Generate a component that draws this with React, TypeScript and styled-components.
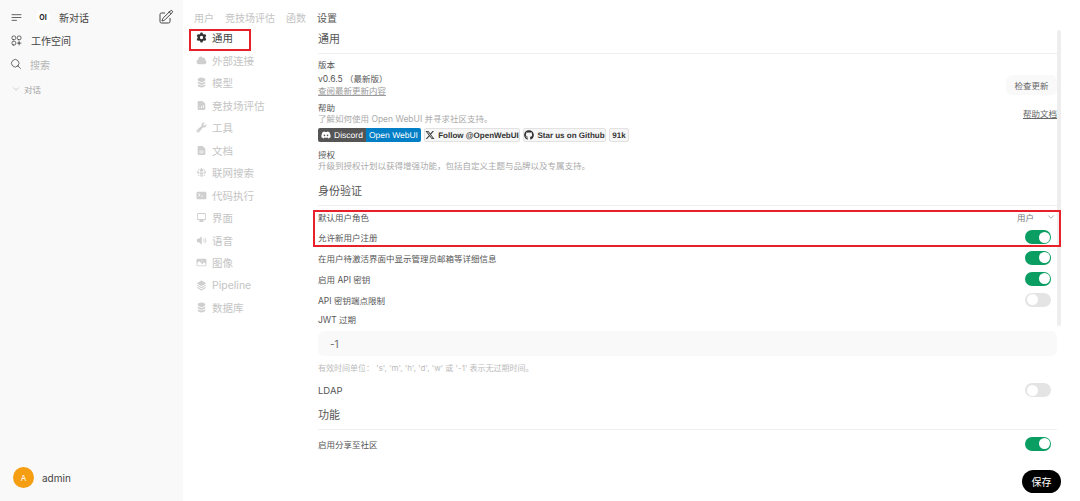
import React from 'react';
import styled, { createGlobalStyle } from 'styled-components';
import { FaDiscord, FaGithub } from 'react-icons/fa';
import { FaXTwitter } from 'react-icons/fa6';
import {
  HiMiniCircleStack,
  HiMiniCloud,
  HiMiniCog6Tooth,
  HiMiniCommandLine,
  HiMiniComputerDesktop,
  HiMiniDocumentChartBar,
  HiMiniDocumentText,
  HiMiniGlobeAlt,
  HiMiniPhoto,
  HiMiniSpeakerWave,
  HiMiniSquare3Stack3D,
  HiMiniWrench,
  HiOutlineBars3BottomLeft,
  HiOutlineChevronDown,
  HiOutlineMagnifyingGlass,
  HiOutlinePencilSquare,
  HiOutlineSquaresPlus,
} from 'react-icons/hi2';

const GlobalStyle = createGlobalStyle`
  html, body, #root {
    margin: 0;
    height: 100%;
  }
  body {
    background: #fff;
    color: #444;
    font-family: Inter, "Noto Sans CJK SC", "Noto Sans", sans-serif;
    overflow: hidden;
  }
`;

const Page = styled.div`
  position: relative;
  display: flex;
  height: 501px;
  width: 1080px;
  overflow: hidden;
`;

const Sidebar = styled.aside`
  width: 183px;
  flex-shrink: 0;
  background: #f9f9f9;
  display: flex;
  flex-direction: column;
  padding: 9px 9px 13px 10px;
  box-sizing: border-box;
`;

const SideTop = styled.div`
  display: flex;
  align-items: center;
  height: 16px;
  color: #444;
`;

const Logo = styled.div`
  width: 14px;
  height: 14px;
  border-radius: 50%;
  background: #fff;
  margin-left: 13px;
  display: flex;
  align-items: center;
  justify-content: center;
  font-size: 7px;
  font-weight: 700;
  color: #222;
`;

const NewChat = styled.span`
  font-size: 10px;
  margin-left: 9px;
  flex: 1;
`;

const SideItem = styled.div<{ $top: number; $muted?: boolean }>`
  display: flex;
  align-items: center;
  gap: 8px;
  height: 14px;
  margin-top: ${p => p.$top}px;
  font-size: 10px;
  color: ${p => (p.$muted ? '#b5b5b5' : '#444')};
  svg {
    color: #444;
  }
`;

const Group = styled.div`
  display: flex;
  align-items: center;
  gap: 4px;
  margin: 12px 0 0 2px;
  height: 12px;
  font-size: 8.5px;
  color: #a3a3a3;
`;

const Spacer = styled.div`
  flex: 1;
`;

const UserRow = styled.div`
  display: flex;
  align-items: center;
  gap: 8px;
  margin-left: 3px;
  font-size: 10px;
  color: #444;
`;

const Avatar = styled.div`
  width: 21px;
  height: 21px;
  border-radius: 50%;
  background: #f59e12;
  color: #fff;
  font-size: 8px;
  display: flex;
  align-items: center;
  justify-content: center;
`;

const Main = styled.main`
  flex: 1;
  display: flex;
  flex-direction: column;
  padding: 10px 0 0 11px;
  min-width: 0;
`;

const Tabs = styled.nav`
  display: flex;
  gap: 11px;
  height: 14px;
  align-items: center;
  font-size: 10px;
  color: #c4c4c4;
`;

const Tab = styled.span<{ $active?: boolean }>`
  color: ${p => (p.$active ? '#555' : '#c4c4c4')};
`;

const Body = styled.div`
  display: flex;
  min-height: 0;
`;

const SettingsNav = styled.ul`
  list-style: none;
  width: 124px;
  flex-shrink: 0;
  margin: 0;
  padding: 2.5px 0 0 2px;
  box-sizing: border-box;
`;

const NavItem = styled.li<{ $active?: boolean }>`
  display: flex;
  align-items: center;
  gap: 5px;
  height: 22.5px;
  font-size: 10.5px;
  color: ${p => (p.$active ? '#444' : '#c4c4c4')};
  svg {
    width: 11px;
    height: 11px;
    color: ${p => (p.$active ? '#333' : '#cfcfcf')};
  }
`;

const Content = styled.section`
  width: 739px;
  padding-top: 8px;
`;

const Heading = styled.h2<{ $top?: number }>`
  margin: ${p => p.$top ?? 0}px 0 0;
  height: 15px;
  line-height: 15px;
  font-size: 11px;
  font-weight: 400;
  color: #555;
  padding-bottom: 6px;
  border-bottom: 1px solid #f0f0f0;
`;

const Label = styled.div<{ $top?: number }>`
  margin-top: ${p => p.$top ?? 0}px;
  height: 12px;
  line-height: 12px;
  font-size: 8.5px;
  color: #555;
`;

const Version = styled.div`
  margin-top: 2px;
  height: 12px;
  line-height: 12px;
  font-size: 8.5px;
  color: #555;
`;

const SplitRow = styled.div`
  display: flex;
  justify-content: space-between;
  align-items: flex-start;
`;

const MutedLink = styled.a`
  display: block;
  height: 12px;
  line-height: 12px;
  font-size: 8.5px;
  color: #9a9a9a;
  text-decoration: underline;
`;

const DocsLink = styled.a`
  font-size: 8.5px;
  line-height: 12px;
  margin: 11px 0 -6px;
  color: #666;
  text-decoration: underline;
`;

const CheckButton = styled.button`
  border: none;
  background: #f9f9f9;
  border-radius: 6px;
  font: inherit;
  font-size: 8.5px;
  color: #666;
  width: 51px;
  height: 20px;
  margin-top: 4px;
  padding: 0;
`;

const Muted = styled.div`
  height: 11px;
  line-height: 11px;
  font-size: 8.5px;
  color: #aaa;
`;

const Badges = styled.div`
  display: flex;
  gap: 3px;
  margin-top: 3px;
  height: 14px;
  font-family: "Liberation Sans", sans-serif;
  text-rendering: geometricPrecision;
  svg {
    flex-shrink: 0;
  }
`;

const DuoBadge = styled.div`
  display: flex;
  width: 103px;
  border-radius: 2px;
  overflow: hidden;
  font-size: 8.5px;
  color: #fff;
`;

const BadgePart = styled.span<{ $bg: string; $width: number }>`
  display: flex;
  align-items: center;
  justify-content: center;
  gap: 3px;
  width: ${p => p.$width}px;
  background: ${p => p.$bg};
`;

const SocialBadge = styled.div<{ $width: number }>`
  display: flex;
  align-items: center;
  justify-content: center;
  gap: 3px;
  box-sizing: border-box;
  width: ${p => p.$width}px;
  background: #f6f6f6;
  border: 1px solid #e2e2e2;
  border-radius: 2px;
  font-size: 8px;
  font-weight: 700;
  color: #333;
  white-space: nowrap;
`;

const Row = styled.div<{ $height?: number; $size?: number }>`
  display: flex;
  align-items: center;
  justify-content: space-between;
  height: ${p => p.$height ?? 21}px;
  font-size: ${p => p.$size ?? 8.5}px;
  color: #555;
`;

const RoleValue = styled.span`
  display: flex;
  align-items: center;
  gap: 13px;
  color: #777;
  padding-right: 2px;
  svg {
    color: #555;
  }
`;

const Toggle = styled.span<{ $on?: boolean }>`
  display: flex;
  align-items: center;
  justify-content: ${p => (p.$on ? 'flex-end' : 'flex-start')};
  box-sizing: border-box;
  width: 26px;
  height: 14px;
  padding: 1.5px;
  margin-right: 6px;
  border-radius: 7px;
  background: ${p => (p.$on ? '#0b9e63' : '#e4e4e4')};
  &::after {
    content: '';
    width: 11px;
    height: 11px;
    border-radius: 50%;
    background: #fff;
  }
`;

const TextField = styled.div`
  display: flex;
  align-items: center;
  height: 25px;
  margin-top: 5px;
  padding-left: 12px;
  border-radius: 6px;
  background: #f9f9f9;
  font-size: 10px;
  color: #666;
`;

const Hint = styled.div`
  margin-top: 6px;
  height: 12px;
  line-height: 12px;
  font-size: 8px;
  color: #bbb;
`;

const Scrollbar = styled.div`
  position: absolute;
  left: 1057px;
  top: 30px;
  width: 4px;
  height: 296px;
  border-radius: 2px;
  background: #eeeeee;
`;

const SaveButton = styled.button`
  position: absolute;
  left: 1022px;
  top: 470px;
  width: 39px;
  height: 23px;
  border: none;
  border-radius: 12px;
  background: #000;
  color: #fff;
  font: inherit;
  font-size: 10px;
  padding: 0;
`;

const Callout = styled.div<{ $x: number; $y: number; $w: number; $h: number }>`
  position: absolute;
  left: ${p => p.$x}px;
  top: ${p => p.$y}px;
  width: ${p => p.$w}px;
  height: ${p => p.$h}px;
  box-sizing: border-box;
  border: 2px solid #e8202a;
  pointer-events: none;
`;

const navItems = [
  { label: '通用', icon: HiMiniCog6Tooth, active: true },
  { label: '外部连接', icon: HiMiniCloud },
  { label: '模型', icon: HiMiniCircleStack },
  { label: '竞技场评估', icon: HiMiniDocumentChartBar },
  { label: '工具', icon: HiMiniWrench },
  { label: '文档', icon: HiMiniDocumentText },
  { label: '联网搜索', icon: HiMiniGlobeAlt },
  { label: '代码执行', icon: HiMiniCommandLine },
  { label: '界面', icon: HiMiniComputerDesktop },
  { label: '语音', icon: HiMiniSpeakerWave },
  { label: '图像', icon: HiMiniPhoto },
  { label: 'Pipeline', icon: HiMiniSquare3Stack3D },
  { label: '数据库', icon: HiMiniCircleStack },
];

export default function App() {
  return (
    <Page>
      <GlobalStyle />
      <Sidebar>
        <SideTop>
          <HiOutlineBars3BottomLeft size={13} />
          <Logo>OI</Logo>
          <NewChat>新对话</NewChat>
          <HiOutlinePencilSquare size={16} />
        </SideTop>
        <SideItem $top={8}>
          <HiOutlineSquaresPlus size={13} />
          工作空间
        </SideItem>
        <SideItem $top={10} $muted>
          <HiOutlineMagnifyingGlass size={12} />
          搜索
        </SideItem>
        <Group>
          <HiOutlineChevronDown size={8} />
          对话
        </Group>
        <Spacer />
        <UserRow>
          <Avatar>A</Avatar>
          admin
        </UserRow>
      </Sidebar>

      <Main>
        <Tabs>
          <Tab>用户</Tab>
          <Tab>竞技场评估</Tab>
          <Tab>函数</Tab>
          <Tab $active>设置</Tab>
        </Tabs>
        <Body>
          <SettingsNav>
            {navItems.map(item => (
              <NavItem key={item.label} $active={item.active}>
                <item.icon />
                {item.label}
              </NavItem>
            ))}
          </SettingsNav>
          <Content>
            <Heading>通用</Heading>
            <Label $top={5}>版本</Label>
            <SplitRow>
              <div>
                <Version>v0.6.5 （最新版）</Version>
                <MutedLink>查阅最新更新内容</MutedLink>
              </div>
              <CheckButton>检查更新</CheckButton>
            </SplitRow>
            <SplitRow>
              <Label $top={5}>帮助</Label>
              <DocsLink>帮助文档</DocsLink>
            </SplitRow>
            <Muted>了解如何使用 Open WebUI 并寻求社区支持。</Muted>
            <Badges>
              <DuoBadge>
                <BadgePart $bg="#555" $width={48}>
                  <FaDiscord size={10} />
                  Discord
                </BadgePart>
                <BadgePart $bg="#007ec6" $width={55}>
                  Open WebUI
                </BadgePart>
              </DuoBadge>
              <SocialBadge $width={96}>
                <FaXTwitter size={10} />
                Follow @OpenWebUI
              </SocialBadge>
              <SocialBadge $width={83}>
                <FaGithub size={10} />
                Star us on Github
              </SocialBadge>
              <SocialBadge $width={20}>91k</SocialBadge>
            </Badges>
            <Label $top={7}>授权</Label>
            <Muted>升级到授权计划以获得增强功能，包括自定义主题与品牌以及专属支持。</Muted>

            <Heading $top={12}>身份验证</Heading>
            <Row>
              默认用户角色
              <RoleValue>
                用户
                <HiOutlineChevronDown size={8} />
              </RoleValue>
            </Row>
            <Row $height={20}>
              允许新用户注册
              <Toggle $on />
            </Row>
            <Row>
              在用户待激活界面中显示管理员邮箱等详细信息
              <Toggle $on />
            </Row>
            <Row>
              启用 API 密钥
              <Toggle $on />
            </Row>
            <Row>
              API 密钥端点限制
              <Toggle />
            </Row>
            <Label $top={4}>JWT 过期</Label>
            <TextField>-1</TextField>
            <Hint>有效时间单位： 's', 'm', 'h', 'd', 'w' 或 '-1' 表示无过期时间。</Hint>
            <Row $height={32} $size={9.5}>
              LDAP
              <Toggle />
            </Row>
            <Heading $top={2}>功能</Heading>
            <Row $height={27}>
              启用分享至社区
              <Toggle $on />
            </Row>
          </Content>
        </Body>
      </Main>

      <Scrollbar />
      <SaveButton>保存</SaveButton>
      <Callout $x={189} $y={29} $w={62} $h={22} />
      <Callout $x={313} $y={210} $w={748} $h={37} />
    </Page>
  );
}
